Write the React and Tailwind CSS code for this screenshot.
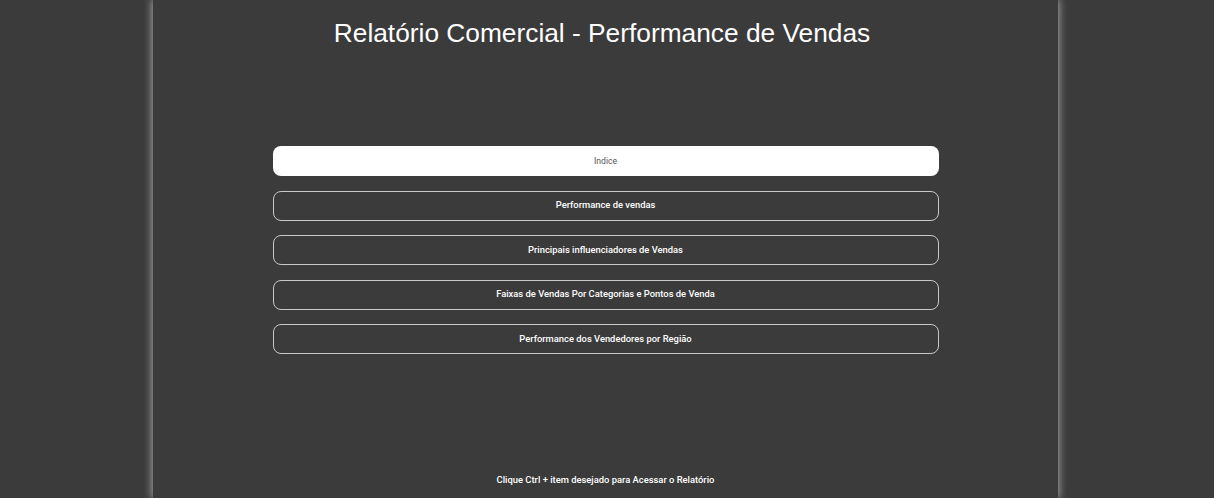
import React from "react";

const items = [
  "Performance de vendas",
  "Principais influenciadores de Vendas",
  "Faixas de Vendas Por Categorias e Pontos de Venda",
  "Performance dos Vendedores por Região",
];

export default function App() {
  return (
    <div className="w-full h-[498px] bg-[#3b3b3b] overflow-hidden" style={{ fontFamily: '"Liberation Sans", Arial, sans-serif' }}>
      <div className="ml-[153px] w-[905px] h-full bg-[#3b3b3b] shadow-[0_0_8px_1px_rgba(255,255,255,0.55)] flex flex-col items-center">
        <h1 className="pt-[17px] pr-[7px] text-[26.3px] leading-[32px] text-white">Relatório Comercial - Performance de Vendas</h1>
        <div className="mt-[97px] w-[666px] flex flex-col gap-[14.5px] font-['Roboto',sans-serif]">
          <div className="h-[30px] rounded-lg bg-white flex items-center justify-center text-[8.6px] text-[#555]">Indice</div>
          {items.map((t) => (
            <div key={t} className="h-[30px] rounded-lg border border-[#c8c8c8] flex items-center justify-center text-[9.4px] font-medium text-white">{t}</div>
          ))}
        </div>
        <div className="mt-auto pb-[11px] text-[9.4px] font-medium text-white font-['Roboto',sans-serif]">Clique Ctrl + item desejado para Acessar o Relatório</div>
      </div>
    </div>
  );
}
